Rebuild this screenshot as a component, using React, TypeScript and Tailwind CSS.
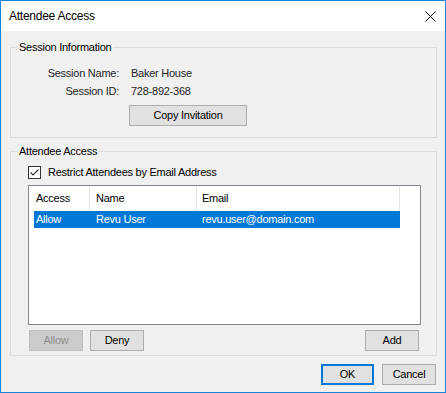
const font = "font-['Liberation_Sans',Arial,sans-serif] text-[11px] tracking-[-0.25px]";

function Btn({ label, className = "", disabled = false, primary = false }: { label: string; className?: string; disabled?: boolean; primary?: boolean }) {
  const tone = disabled
    ? "bg-[#cccccc] border-[#bfbfbf] text-[#8f8f8f]"
    : primary
    ? "bg-[#e1e1e1] border-2 border-[#0078d7] text-black"
    : "bg-[#e1e1e1] border-[#adadad] text-black";
  return (
    <button className={`h-[21px] w-[54px] border flex items-center justify-center leading-none ${tone} ${className}`}>
      {label}
    </button>
  );
}

function Group({ title, children, className = "" }: { title: string; children: React.ReactNode; className?: string }) {
  return (
    <fieldset className={`border border-[#dcdcdc] ${className}`}>
      <legend className="ml-[6px] px-[2px] h-[15px] leading-[15px] text-black">{title}</legend>
      {children}
    </fieldset>
  );
}

export default function App() {
  return (
    <div className={`w-[446px] h-[393px] border border-[#1883d7] bg-[#f0f0f0] flex flex-col ${font}`}>
      {/* title bar */}
      <div className="h-[30px] bg-white flex items-center justify-between pl-[8px] pr-[9px] shrink-0">
        <span className="text-[12px] text-black">Attendee Access</span>
        <svg width="11" height="11" viewBox="0 0 11 11">
          <path d="M0.5 0.5 L10.5 10.5 M10.5 0.5 L0.5 10.5" stroke="#000" strokeWidth="1" fill="none" />
        </svg>
      </div>

      <div className="pl-[9px] pr-[8px] flex flex-col">
        <Group title="Session Information" className="mt-[9px] pb-[11px]">
          <div className="grid grid-cols-[108px_1fr] gap-x-[12px] pt-[9px] text-[#1e1e1e]">
            <span className="text-right leading-[18px]">Session Name:</span>
            <span className="leading-[18px]">Baker House</span>
            <span className="text-right leading-[18px]">Session ID:</span>
            <span className="leading-[18px]">728-892-368</span>
          </div>
          <Btn label="Copy Invitation" className="!w-[118px] ml-[118px] mt-[5px]" />
        </Group>

        <Group title="Attendee Access" className="mt-[6px] pb-[4px]">
          <label className="flex items-center gap-[7px] ml-[17px] mt-[7px] h-[13px] text-black">
            <span className="w-[13px] h-[13px] border border-[#333333] bg-white flex items-center justify-center">
              <svg width="11" height="11" viewBox="0 0 11 11">
                <path d="M1.5 5.5 L4 8 L9.5 2.5" stroke="#333" strokeWidth="1.1" fill="none" />
              </svg>
            </span>
            Restrict Attendees by Email Address
          </label>

          <div className="ml-[17px] mr-[15px] mt-[6px] h-[140px] border border-[#828790] bg-white">
            <div className="flex w-[371px] h-[25px] items-center text-black">
              <div className="w-[61px] h-full pl-[7px] flex items-center border-r border-[#e5e5e5]">Access</div>
              <div className="w-[107px] h-full pl-[6px] flex items-center border-r border-[#e5e5e5]">Name</div>
              <div className="w-[203px] h-full pl-[5px] flex items-center border-r border-[#e5e5e5]">Email</div>
            </div>
            <div className="ml-[5px] w-[366px] h-[17px] bg-[#0078d7] text-white flex items-center">
              <span className="w-[56px] pl-[2px]">Allow</span>
              <span className="w-[107px] pl-[6px]">Revu User</span>
              <span className="pl-[5px]">revu.user@domain.com</span>
            </div>
          </div>

          <div className="flex items-center ml-[18px] mr-[17px] mt-[5px]">
            <Btn label="Allow" disabled />
            <Btn label="Deny" className="ml-[7px]" />
            <Btn label="Add" className="ml-auto" />
          </div>
        </Group>

        <div className="flex justify-end gap-[8px] mt-[8px] pr-[1px]">
          <Btn label="OK" primary className="!w-[53px]" />
          <Btn label="Cancel" />
        </div>
      </div>
    </div>
  );
}
